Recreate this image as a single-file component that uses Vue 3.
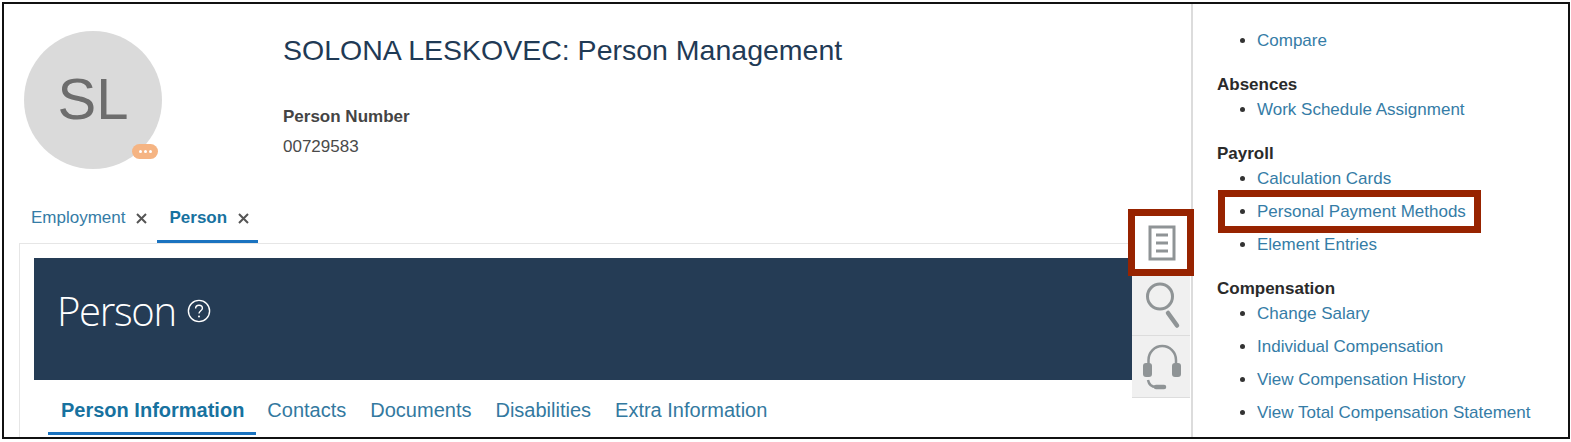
<script setup>
const mainTabs = [
  { label: 'Employment', active: false },
  { label: 'Person', active: true },
]
const subTabs = ['Person Information', 'Contacts', 'Documents', 'Disabilities', 'Extra Information']
const groups = [
  { title: '', links: ['Compare'] },
  { title: 'Absences', links: ['Work Schedule Assignment'] },
  { title: 'Payroll', links: ['Calculation Cards', 'Personal Payment Methods', 'Element Entries'] },
  { title: 'Compensation', links: ['Change Salary', 'Individual Compensation', 'View Compensation History', 'View Total Compensation Statement'] },
]
</script>

<template>
  <div class="frame">
    <main class="main">
      <header class="head">
        <div class="avatar">
          SL
          <span class="badge"><i></i><i></i><i></i></span>
        </div>
        <div class="identity">
          <h1>SOLONA LESKOVEC: Person Management</h1>
          <div class="label">Person Number</div>
          <div class="value">00729583</div>
        </div>
      </header>

      <nav class="tabs">
        <div v-for="t in mainTabs" :key="t.label" class="tab" :class="{ on: t.active }">
          <span>{{ t.label }}</span>
          <svg class="x" width="11" height="11" viewBox="0 0 11 11"><path d="M1 1l9 9M10 1l-9 9" /></svg>
        </div>
      </nav>

      <section class="card">
        <div class="banner">
          <span class="banner-title">Person</span>
          <svg width="24" height="24" viewBox="0 0 24 24" class="help">
            <circle cx="12" cy="12" r="10.6" />
            <path d="M8.6 9.4c0-2 1.5-3.2 3.4-3.2s3.4 1.2 3.4 3c0 2.6-3.4 2.6-3.4 5.4" />
            <circle class="dot" cx="12" cy="17.6" r="1" />
          </svg>
        </div>
        <div class="subtabs">
          <span v-for="(s, i) in subTabs" :key="s" class="subtab" :class="{ on: i === 0 }">{{ s }}</span>
        </div>
      </section>

      <div class="rail">
        <div class="rail-btn doc">
          <svg width="28" height="36" viewBox="0 0 28 36">
            <rect x="2" y="2" width="24" height="32" />
            <path d="M8 10h12M8 18h12M8 26h12" />
          </svg>
        </div>
        <div class="rail-btn search">
          <svg width="40" height="50" viewBox="0 0 40 50">
            <circle cx="19" cy="15.5" r="12.5" />
            <path class="handle" d="M27 32l9 12.5" />
          </svg>
        </div>
        <div class="rail-btn">
          <svg width="42" height="46" viewBox="0 0 42 46">
            <path class="thin" d="M8.5 20V16a13.75 14 0 0 1 27.5 0v4" />
            <rect class="cup" x="3" y="19" width="9" height="14" rx="3" />
            <rect class="cup" x="32" y="19" width="9" height="14" rx="3" />
            <path class="thin" d="M8 36c1 5 4 7 8 7" />
            <path class="handle" d="M16 43h8" />
          </svg>
        </div>
      </div>
    </main>

    <aside class="side">
      <div v-for="g in groups" :key="g.links[0]" class="group">
        <h2 v-if="g.title">{{ g.title }}</h2>
        <ul>
          <li v-for="l in g.links" :key="l"><a>{{ l }}</a></li>
        </ul>
      </div>
      <div class="callout"></div>
    </aside>
  </div>
</template>

<style>
html, body { margin: 0; background: #fff; }
</style>

<style scoped>
.frame {
  box-sizing: border-box;
  position: relative;
  display: flex;
  width: 1568px;
  height: 437px;
  margin: 2px 0 0 2px;
  border: 2px solid #111;
  overflow: hidden;
  background: #fff;
  font-family: "Liberation Sans", Arial, sans-serif;
}
.main {
  position: relative;
  z-index: 1;
  flex: none;
  width: 1187px;
  box-sizing: border-box;
  padding: 27px 0 0 15px;
}
.head { display: flex; height: 138px; }
.avatar {
  position: relative;
  flex: none;
  width: 138px;
  height: 138px;
  margin-left: 5px;
  border-radius: 50%;
  background: #dadada;
  color: #6d6d6d;
  font-size: 58px;
  line-height: 136px;
  text-align: center;
}
.badge {
  position: absolute;
  left: 108px;
  top: 113px;
  width: 26px;
  height: 15px;
  border-radius: 8px;
  background: #f5b483;
  display: flex;
  align-items: center;
  justify-content: center;
  gap: 2px;
}
.badge i { width: 3px; height: 3px; border-radius: 50%; background: #fff; }
.identity { margin-left: 121px; }
h1 {
  margin: 0;
  color: #1f3a55;
  font-size: 28.5px;
  line-height: 38px;
  font-weight: 400;
}
.label {
  margin-top: 38px;
  color: #444;
  font-size: 17px;
  font-weight: 700;
  line-height: 20px;
}
.value {
  margin-top: 10px;
  color: #4a4a4a;
  font-size: 17px;
  line-height: 20px;
}
.tabs { display: flex; height: 40px; margin-top: 34px; }
.tab {
  display: flex;
  align-items: center;
  box-sizing: border-box;
  height: 40px;
  padding: 0 10px 10px 12px;
  color: #357ca6;
  font-size: 17px;
}
.tab span { margin-right: 11px; }
.tab.on {
  padding-left: 12px;
  padding-right: 9px;
  color: #17729f;
  font-weight: 700;
  border-bottom: 3px solid #1a73c0;
  padding-bottom: 7px;
}
.x { fill: none; stroke: #555; stroke-width: 2; }
.card {
  box-sizing: border-box;
  height: 220px;
  padding: 14px 59px 0 14px;
  border: 1px solid #e6e6e6;
  border-width: 1px 0 0 1px;
}
.banner {
  display: flex;
  align-items: center;
  box-sizing: border-box;
  height: 122px;
  padding: 0 0 17px 23px;
  background: #253c55;
  color: #fff;
}
.banner-title {
  font-family: "Open Sans", sans-serif;
  font-weight: 300;
  font-size: 40px;
  letter-spacing: -1.3px;
}
.help { margin-left: 11px; fill: none; stroke: #fff; stroke-width: 1.4; }
.help .dot { fill: #fff; stroke: none; }
.subtabs { display: flex; gap: 24px; padding-left: 14px; }
.subtab {
  height: 52px;
  line-height: 60px;
  color: #33799f;
  font-size: 20px;
}
.subtab.on {
  padding: 0 12px 0 13px;
  margin-right: -13px;
  color: #17729f;
  font-weight: 700;
  border-bottom: 3px solid #1a73c0;
}
.rail {
  position: absolute;
  left: 1128px;
  top: 205px;
  width: 58px;
  background: #f0f0f0;
  border-bottom: 1px solid #ddd;
  display: flex;
  flex-direction: column;
}
.rail-btn {
  display: flex;
  align-items: center;
  justify-content: center;
  height: 62px;
  border-top: 1px solid #dcdcdc;
  box-sizing: border-box;
}
.rail-btn svg { fill: none; stroke: #8f9496; stroke-width: 3; }
.rail-btn .thin { stroke-width: 2.5; }
.rail-btn .cup { fill: #8f9496; stroke: none; }
.rail-btn .handle { stroke-width: 4.5; stroke-linecap: round; }
.rail-btn.search { height: 59px; border-top: 0; }
.rail-btn.doc {
  height: 67px;
  margin: 0 -4px;
  padding-left: 2px;
  border: 7px solid #972300;
  background: #fff;
}
.side {
  position: relative;
  flex: 1;
  box-sizing: border-box;
  padding: 22px 0 0 24px;
  border-left: 2px solid #dcdcdc;
}
.group + .group { margin-top: 19px; }
h2 {
  margin: 0;
  color: #2a2a2a;
  font-size: 17px;
  font-weight: 700;
  line-height: 20px;
}
ul { margin: 0; padding: 0 0 0 40px; list-style: disc; color: #333; }
li { font-size: 17px; line-height: 30px; }
li + li { margin-top: 3px; }
a { color: #357ca6; }
.callout {
  position: absolute;
  left: 25px;
  top: 186px;
  width: 263px;
  height: 43px;
  box-sizing: border-box;
  border: 7px solid #972300;
}
</style>
